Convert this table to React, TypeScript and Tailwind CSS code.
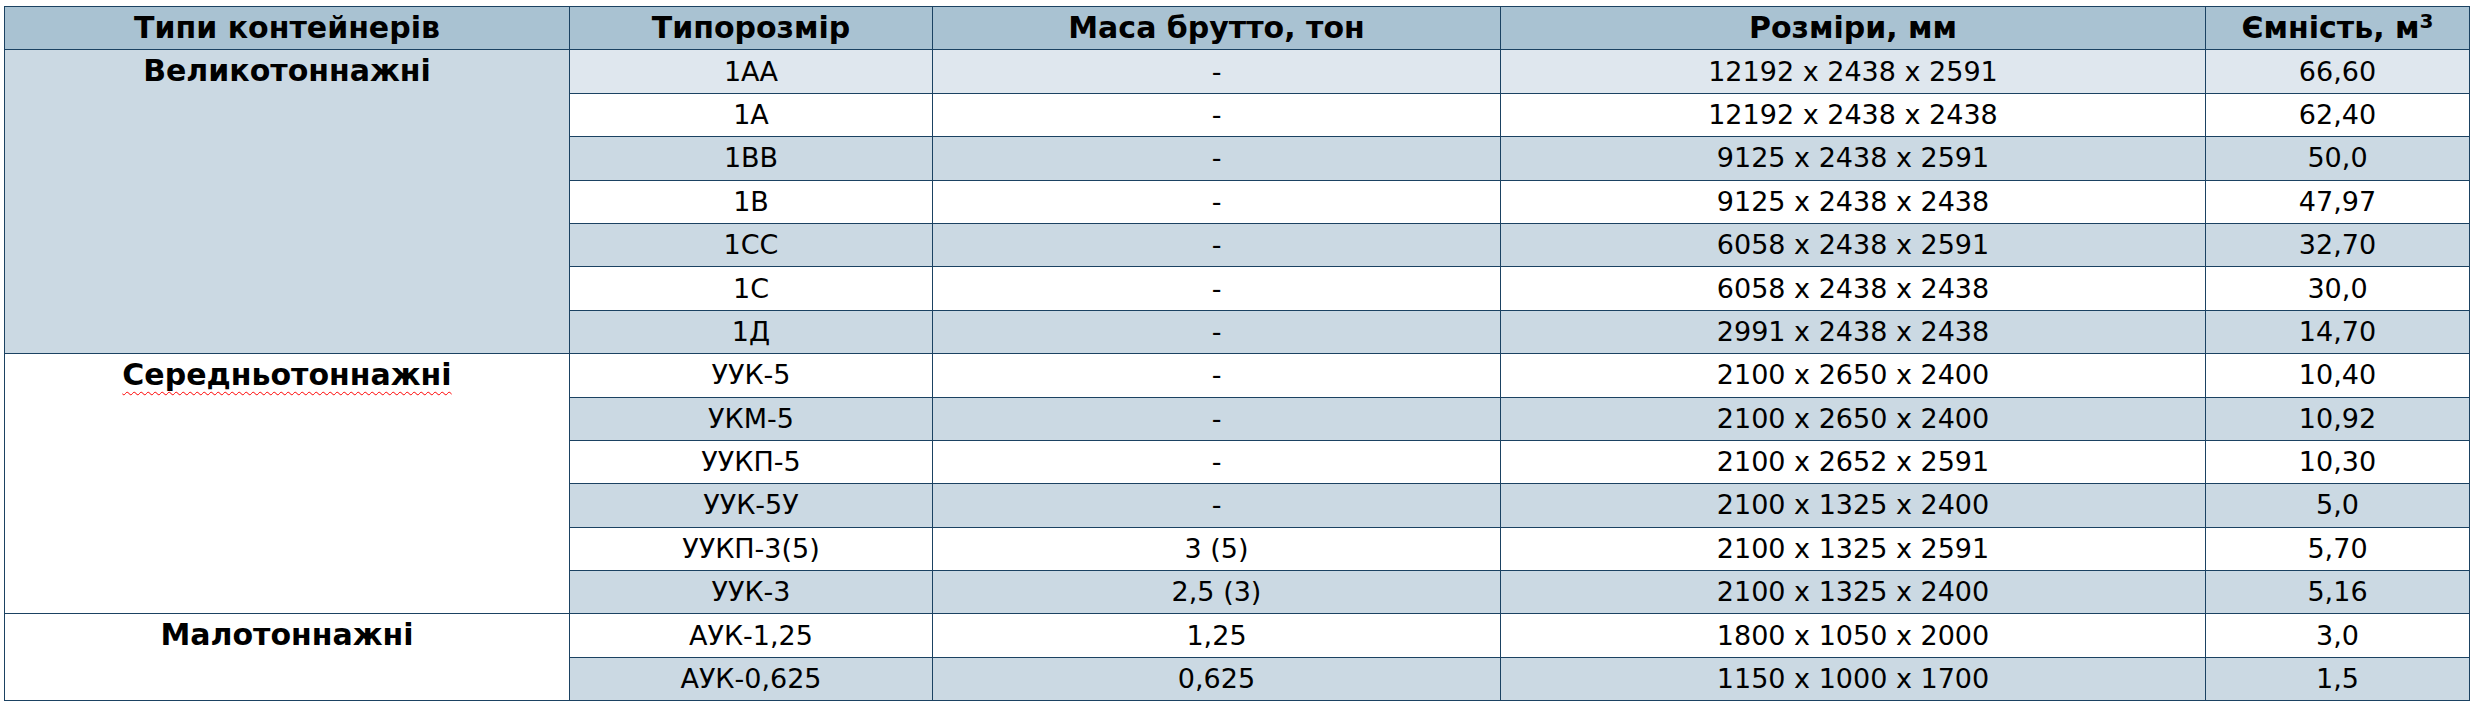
import React from 'react';

interface Row {
  size: string;
  mass: string;
  dims: string;
  volume: string;
  shade: 'light' | 'white' | 'blue';
}

interface Group {
  name: string;
  shade: 'blue' | 'white';
  squiggle?: boolean;
  rows: Row[];
}

const groups: Group[] = [
  {
    name: 'Великотоннажні',
    shade: 'blue',
    rows: [
      { size: '1АА', mass: '-', dims: '12192 x 2438 x 2591', volume: '66,60', shade: 'light' },
      { size: '1А', mass: '-', dims: '12192 x 2438 x 2438', volume: '62,40', shade: 'white' },
      { size: '1ВВ', mass: '-', dims: '9125 x 2438 x 2591', volume: '50,0', shade: 'blue' },
      { size: '1В', mass: '-', dims: '9125 x 2438 x 2438', volume: '47,97', shade: 'white' },
      { size: '1СС', mass: '-', dims: '6058 x 2438 x 2591', volume: '32,70', shade: 'blue' },
      { size: '1С', mass: '-', dims: '6058 x 2438 x 2438', volume: '30,0', shade: 'white' },
      { size: '1Д', mass: '-', dims: '2991 x 2438 x 2438', volume: '14,70', shade: 'blue' },
    ],
  },
  {
    name: 'Середньотоннажні',
    shade: 'white',
    squiggle: true,
    rows: [
      { size: 'УУК-5', mass: '-', dims: '2100 x 2650 x 2400', volume: '10,40', shade: 'white' },
      { size: 'УКМ-5', mass: '-', dims: '2100 x 2650 x 2400', volume: '10,92', shade: 'blue' },
      { size: 'УУКП-5', mass: '-', dims: '2100 x 2652 x 2591', volume: '10,30', shade: 'white' },
      { size: 'УУК-5У', mass: '-', dims: '2100 x 1325 x 2400', volume: '5,0', shade: 'blue' },
      { size: 'УУКП-3(5)', mass: '3 (5)', dims: '2100 x 1325 x 2591', volume: '5,70', shade: 'white' },
      { size: 'УУК-3', mass: '2,5 (3)', dims: '2100 x 1325 x 2400', volume: '5,16', shade: 'blue' },
    ],
  },
  {
    name: 'Малотоннажні',
    shade: 'white',
    rows: [
      { size: 'АУК-1,25', mass: '1,25', dims: '1800 x 1050 x 2000', volume: '3,0', shade: 'white' },
      { size: 'АУК-0,625', mass: '0,625', dims: '1150 x 1000 x 1700', volume: '1,5', shade: 'blue' },
    ],
  },
];

const shadeClass = {
  light: 'bg-[#dfe7ee]',
  white: 'bg-white',
  blue: 'bg-[#cbd9e3]',
};

const cell = 'border border-[#1b4262] p-0 text-center align-middle';

export default function App() {
  return (
    <div
      className="min-h-screen bg-white pl-[4px] pt-[6px] text-black"
      style={{ fontFamily: '"DejaVu Sans", sans-serif' }}
    >
      <table className="table-fixed border-collapse text-[27px] leading-[36px]">
        <colgroup>
          <col className="w-[565px]" />
          <col className="w-[363px]" />
          <col className="w-[568px]" />
          <col className="w-[705px]" />
          <col className="w-[264px]" />
        </colgroup>
        <thead>
          <tr className="h-[43.4px] bg-[#a9c2d2] text-[30px] font-bold">
            <th className={cell}>Типи контейнерів</th>
            <th className={cell}>Типорозмір</th>
            <th className={cell}>Маса брутто, тон</th>
            <th className={cell}>Розміри, мм</th>
            <th className={cell}>
              Ємність, м<sup className="text-[20px]">3</sup>
            </th>
          </tr>
        </thead>
        <tbody>
          {groups.map((group) =>
            group.rows.map((row, i) => (
              <tr key={group.name + row.size} className="h-[43.4px]">
                {i === 0 && (
                  <td
                    rowSpan={group.rows.length}
                    className={`border border-[#1b4262] p-0 text-center align-top text-[30px] font-bold leading-[42px] ${shadeClass[group.shade]}`}
                  >
                    {group.squiggle ? (
                      <span className="underline decoration-[#ff0000] decoration-wavy decoration-1 underline-offset-[6px]">
                        {group.name}
                      </span>
                    ) : (
                      group.name
                    )}
                  </td>
                )}
                <td className={`${cell} ${shadeClass[row.shade]}`}>{row.size}</td>
                <td className={`${cell} ${shadeClass[row.shade]}`}>{row.mass}</td>
                <td className={`${cell} ${shadeClass[row.shade]}`}>{row.dims}</td>
                <td className={`${cell} ${shadeClass[row.shade]}`}>{row.volume}</td>
              </tr>
            ))
          )}
        </tbody>
      </table>
    </div>
  );
}
